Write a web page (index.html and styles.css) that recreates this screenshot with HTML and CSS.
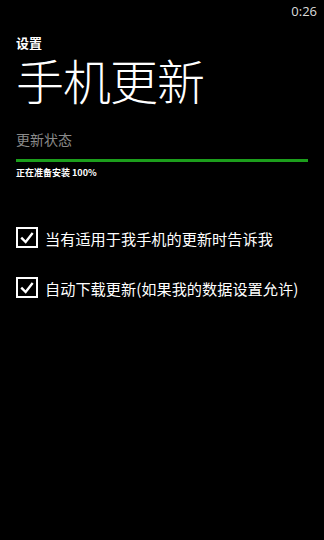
FILE: index.html
```html
<!DOCTYPE html>
<html lang="zh-CN">
<head>
<meta charset="utf-8">
<link rel="stylesheet" href="styles.css">
</head>
<body>
<div class="status"><span class="time">0:26</span></div>
<div class="page">
  <div class="app-title">设置</div>
  <h1 class="page-title">手机更新</h1>
  <div class="section">
    <div class="label">更新状态</div>
    <div class="bar"><div class="fill" style="width:100%"></div></div>
    <div class="progress-text">正在准备安装 100%</div>
  </div>
  <div class="options">
    <label class="check">
      <span class="box"><svg viewBox="0 0 20 20" width="20" height="20"><path d="M4.5 10.5 L8.5 14.5 L15.5 5.5" fill="none" stroke="#fff" stroke-width="2.6" stroke-linecap="square"/></svg></span>
      <span class="text">当有适用于我手机的更新时告诉我</span>
    </label>
    <label class="check">
      <span class="box"><svg viewBox="0 0 20 20" width="20" height="20"><path d="M4.5 10.5 L8.5 14.5 L15.5 5.5" fill="none" stroke="#fff" stroke-width="2.6" stroke-linecap="square"/></svg></span>
      <span class="text">自动下载更新(如果我的数据设置允许)</span>
    </label>
  </div>
</div>
</body>
</html>
```
FILE: styles.css
```css
html, body {
  margin: 0;
  padding: 0;
  background: #000;
  color: #fff;
  font-family: "Noto Sans CJK SC", "Noto Sans", sans-serif;
}
.status {
  height: 22px;
  display: flex;
  justify-content: flex-end;
  align-items: center;
  padding-right: 7px;
}
.time {
  font-family: "Open Sans", "Noto Sans", sans-serif;
  font-size: 13px;
  color: #ddd;
}
.page {
  padding: 0 16px;
}
.app-title {
  margin-top: 14px;
  font-size: 13px;
  font-weight: 700;
  line-height: 13px;
}
.page-title {
  margin: 4px 0 0 0;
  font-size: 48px;
  font-weight: 300;
  line-height: 52px;
  letter-spacing: -1px;
}
.section {
  margin-top: 25px;
}
.label {
  font-size: 14px;
  color: #8a8a8a;
  line-height: 18px;
}
.bar {
  margin-top: 11px;
  height: 3px;
  width: 292px;
  background: #222;
}
.fill {
  height: 100%;
  background: #1c9e1c;
}
.progress-text {
  margin-top: 4px;
  font-size: 9px;
  font-weight: 700;
  line-height: 14px;
}
.options {
  margin-top: 47px;
  display: flex;
  flex-direction: column;
  gap: 29px;
}
.check {
  display: flex;
  align-items: center;
  gap: 7px;
}
.box {
  width: 18px;
  height: 17px;
  border: 2px solid #fff;
  display: flex;
  align-items: center;
  justify-content: center;
  flex: none;
}
.box svg {
  width: 18px;
  height: 18px;
}
.text {
  font-size: 15.2px;
  line-height: 20px;
}
```
